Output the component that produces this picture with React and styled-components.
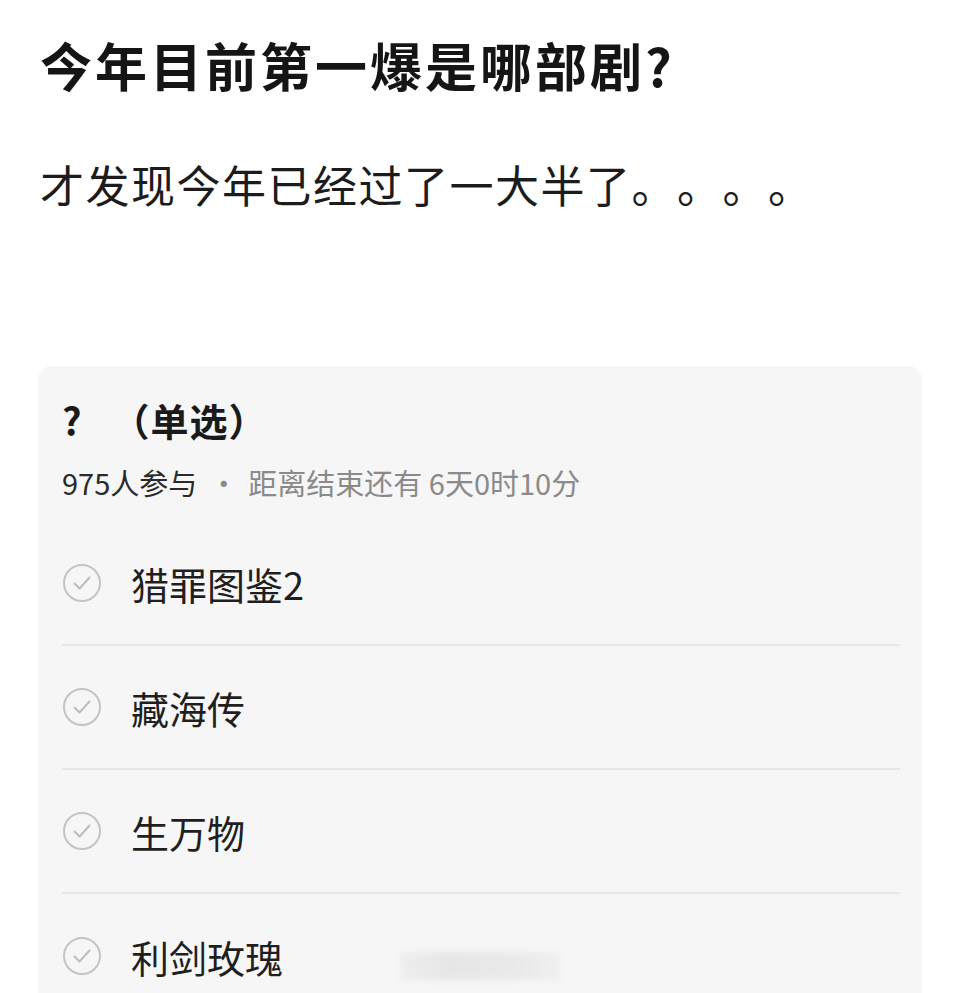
import React from 'react';
import styled, { createGlobalStyle } from 'styled-components';

//--------- GLOBAL ----------//
const GlobalStyle = createGlobalStyle`
  body {
    margin: 0;
    background: #ffffff;
    font-family: "Noto Sans CJK SC", "Noto Sans", sans-serif;
    color: #1a1a1a;
    text-spacing-trim: space-all;
  }
`;

//--------- STYLED COMPONENTS ----------//
const Page = styled.main`
  width: 960px;
  height: 993px;
  overflow: hidden;
  padding: 26px 38px 0 38px;
  box-sizing: border-box;
`;

const Title = styled.h1`
  margin: 0 0 0 2px;
  font-size: 52px;
  line-height: 78px;
  font-weight: 700;
  letter-spacing: 3px;
  color: #151515;
`;

const Desc = styled.p`
  margin: 50px 0 0 2px;
  font-size: 44px;
  line-height: 60px;
  font-weight: 400;
  letter-spacing: 1.5px;
  color: #1c1c1c;
`;

const Card = styled.section`
  margin-top: 152px;
  width: 884px;
  background: #f6f6f6;
  border-radius: 14px;
  padding: 28px 22px 0 24px;
  box-sizing: border-box;
  position: relative;
`;

const PollTitle = styled.h2`
  margin: 0;
  font-size: 38px;
  line-height: 52px;
  font-weight: 700;
  letter-spacing: 1px;
  color: #1a1a1a;
`;

const Meta = styled.div`
  margin-top: 16px;
  font-size: 29px;
  line-height: 40px;
  color: #8a8a8a;
`;

const Count = styled.span`
  color: #2a2a2a;
`;

const Dot = styled.span`
  margin: 0 10px 0 12px;
`;

const Options = styled.ul`
  list-style: none;
  margin: 20px 0 0 0;
  padding: 0;
`;

const Option = styled.li`
  display: flex;
  align-items: center;
  gap: 29px;
  height: 124px;
  border-bottom: ${({ $last }) => ($last ? 'none' : '2px solid #e6e6e6')};
  box-sizing: border-box;
`;

const OptionText = styled.span`
  font-size: 38px;
  color: #1f1f1f;
`;

const Watermark = styled.div`
  position: absolute;
  left: 362px;
  top: 586px;
  width: 160px;
  height: 28px;
  background: linear-gradient(90deg, #eeeeee, #e6e6e6 30%, #e9e9e9 70%, #efefef);
  filter: blur(3px);
  border-radius: 4px;
`;

const CheckCircle = () => (
  <svg width="40" height="40" viewBox="0 0 40 40" fill="none">
    <circle cx="20" cy="20" r="18" stroke="#c4c4c4" strokeWidth="2" />
    <path d="M12.5 20.5 L17.5 25.5 L27.5 14.5" stroke="#bdbdbd" strokeWidth="2" strokeLinecap="round" strokeLinejoin="round" />
  </svg>
);

const options = ['猎罪图鉴2', '藏海传', '生万物', '利剑玫瑰'];

//--------- APP ----------//
const App = () => {
  return (
    <Page>
      <GlobalStyle />
      <Title>今年目前第一爆是哪部剧?</Title>
      <Desc>才发现今年已经过了一大半了。。。。</Desc>

      <Card>
        <PollTitle>?&nbsp;&nbsp;&nbsp;（单选）</PollTitle>
        <Meta>
          <Count>975人参与</Count>
          <Dot>·</Dot>距离结束还有 6天0时10分
        </Meta>
        <Options>
          {options.map((o, i) => (
            <Option key={o} $last={i === options.length - 1}>
              <CheckCircle />
              <OptionText>{o}</OptionText>
            </Option>
          ))}
        </Options>
        <Watermark />
      </Card>
    </Page>
  );
};
export default App;
